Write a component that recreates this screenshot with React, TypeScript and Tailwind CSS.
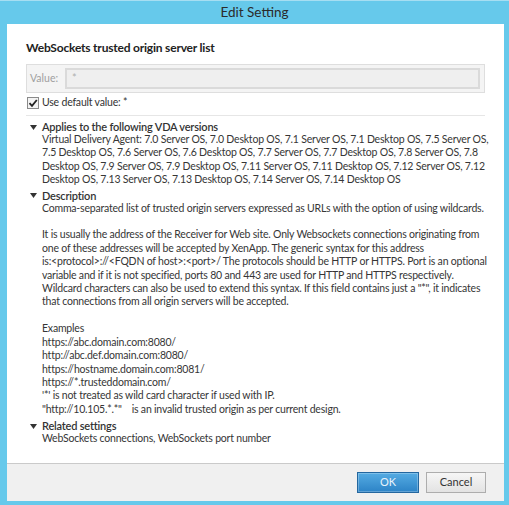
import React from 'react'

const font = { fontFamily: 'Lato, "Noto Sans", sans-serif' }

function Triangle() {
  return (
    <svg width="7" height="5" viewBox="0 0 7 5" className="shrink-0">
      <path d="M0 0 L7 0 L3.5 5 Z" fill="#333" />
    </svg>
  )
}

function Section({ title, children, className = '' }: { title: string; children: React.ReactNode; className?: string }) {
  return (
    <div className={className}>
      <div className="flex items-center h-[12px]">
        <div className="w-[16px] pl-[4px] flex items-center">
          <Triangle />
        </div>
        <span className="text-[11px] leading-[12px] font-semibold tracking-[-0.2px] text-[#333]">{title}</span>
      </div>
      <div className="pl-[16px] text-[10.5px] leading-[13.4px] tracking-[-0.2px] text-[#363636] whitespace-nowrap">{children}</div>
    </div>
  )
}

export default function App() {
  return (
    <div className="w-[509px] h-[505px] bg-[#66c9eb] flex flex-col border-t border-[#a6def2]" style={font}>
      <div className="h-[23px] flex items-center justify-center text-[13.5px] text-[#2b2b2b]">Edit Setting</div>
      <div className="flex-1 ml-[7px] mr-[5px] mb-[4px] flex flex-col">
        <div className="flex-1 bg-white px-[19px] pt-[15px]">
          <div className="text-[12px] leading-[17px] font-bold tracking-[-0.2px] text-[#222]">WebSockets trusted origin server list</div>

          <div className="mt-[8px] h-[29px] border border-[#dedede] bg-[#f4f4f4] flex items-center pl-[3px] pr-[4px]">
            <span className="text-[10.5px] text-[#a0a0a0] w-[35px]">Value:</span>
            <div className="flex-1 h-[21px] border-2 border-[#dadada] bg-[#efefef] flex items-center pl-[5px] text-[11px] text-[#b0b0b0]">*</div>
          </div>

          <div className="mt-[3px] flex items-center h-[13px]">
            <div className="w-[12px] h-[12px] ml-[1px] border border-[#8a8a8a] bg-[#f3f3f3] flex items-center justify-center">
              <svg width="10" height="10" viewBox="0 0 10 10">
                <path d="M1.5 5.2 L4 7.8 L8.8 2" stroke="#222" strokeWidth="1.8" fill="none" />
              </svg>
            </div>
            <span className="ml-[3px] text-[10.5px] tracking-[-0.2px] text-[#333]">Use default value: *</span>
          </div>

          <div className="mt-[6px] border-b border-[#e6e6e6]" />

          <Section title="Applies to the following VDA versions" className="mt-[5px]">
            Virtual Delivery Agent: 7.0 Server OS, 7.0 Desktop OS, 7.1 Server OS, 7.1 Desktop OS, 7.5 Server OS,
            <br />
            7.5 Desktop OS, 7.6 Server OS, 7.6 Desktop OS, 7.7 Server OS, 7.7 Desktop OS, 7.8 Server OS, 7.8
            <br />
            Desktop OS, 7.9 Server OS, 7.9 Desktop OS, 7.11 Server OS, 7.11 Desktop OS, 7.12 Server OS, 7.12
            <br />
            Desktop OS, 7.13 Server OS, 7.13 Desktop OS, 7.14 Server OS, 7.14 Desktop OS
          </Section>

          <Section title="Description" className="mt-[3px]">
            Comma-separated list of trusted origin servers expressed as URLs with the option of using wildcards.
            <br />
            <br />
            It is usually the address of the Receiver for Web site. Only Websockets connections originating from
            <br />
            one of these addresses will be accepted by XenApp. The generic syntax for this address
            <br />
            is:&lt;protocol&gt;://&lt;FQDN of host&gt;:&lt;port&gt;/ The protocols should be HTTP or HTTPS. Port is an optional
            <br />
            variable and if it is not specified, ports 80 and 443 are used for HTTP and HTTPS respectively.
            <br />
            Wildcard characters can also be used to extend this syntax. If this field contains just a "*", it indicates
            <br />
            that connections from all origin servers will be accepted.
            <br />
            <br />
            Examples
            <br />
            https://abc.domain.com:8080/
            <br />
            http://abc.def.domain.com:8080/
            <br />
            https://hostname.domain.com:8081/
            <br />
            https://*.trusteddomain.com/
            <br />
            '*' is not treated as wild card character if used with IP.
            <br />
            "http://10.105.*.*"&nbsp;&nbsp;&nbsp; is an invalid trusted origin as per current design.
          </Section>

          <Section title="Related settings" className="mt-[4px]">
            WebSockets connections, WebSockets port number
          </Section>
        </div>

        <div className="h-[38px] bg-[#f0f0f0] border-t border-[#cacaca] flex items-center justify-end gap-[7px] pr-[18px]">
          <button className="w-[62px] h-[21px] border border-[#24679f] bg-gradient-to-b from-[#55ace3] to-[#2c83c6] text-[11px] text-[#e8f3fb] shadow-[inset_0_0_0_1px_rgba(255,255,255,0.25)]">
            OK
          </button>
          <button className="w-[60px] h-[21px] border border-[#adadad] bg-gradient-to-b from-[#f6f6f6] to-[#e3e3e3] text-[11px] text-[#333]">
            Cancel
          </button>
        </div>
      </div>
    </div>
  )
}
